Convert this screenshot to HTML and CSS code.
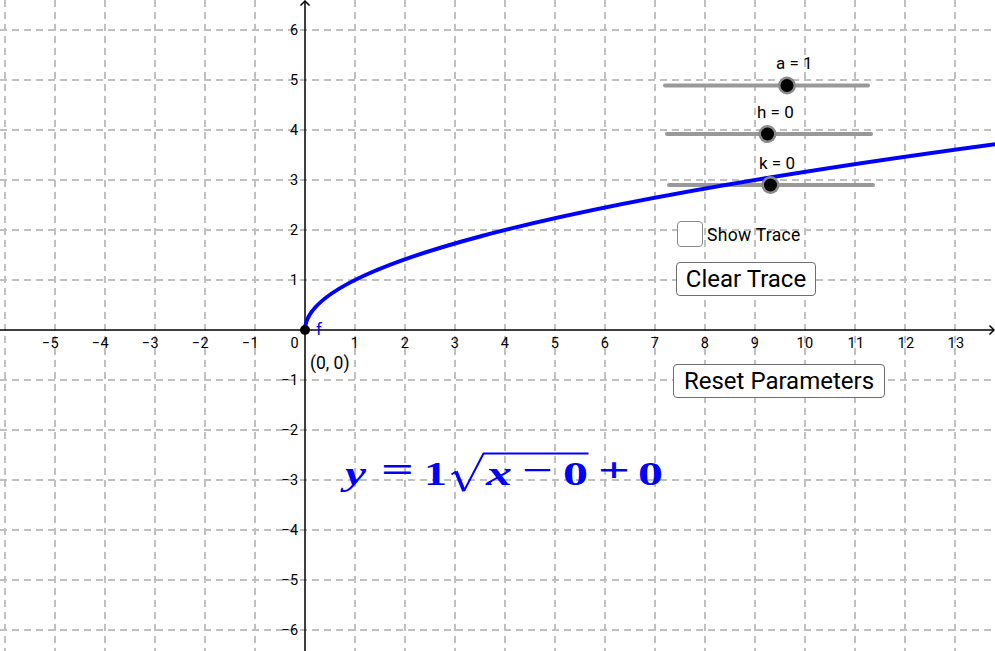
FILE: index.html
```html
<!DOCTYPE html>
<html>
<head>
<meta charset="utf-8">
<link rel="stylesheet" href="styles.css">
</head>
<body>
<div class="applet">
  <svg class="graph" width="995" height="651" viewBox="0 0 995 651">
    <g class="grid">
      <line x1="5" y1="0" x2="5" y2="651"/>
      <line x1="55" y1="0" x2="55" y2="651"/>
      <line x1="105" y1="0" x2="105" y2="651"/>
      <line x1="155" y1="0" x2="155" y2="651"/>
      <line x1="205" y1="0" x2="205" y2="651"/>
      <line x1="255" y1="0" x2="255" y2="651"/>
      <line x1="355" y1="0" x2="355" y2="651"/>
      <line x1="405" y1="0" x2="405" y2="651"/>
      <line x1="455" y1="0" x2="455" y2="651"/>
      <line x1="505" y1="0" x2="505" y2="651"/>
      <line x1="555" y1="0" x2="555" y2="651"/>
      <line x1="605" y1="0" x2="605" y2="651"/>
      <line x1="655" y1="0" x2="655" y2="651"/>
      <line x1="705" y1="0" x2="705" y2="651"/>
      <line x1="755" y1="0" x2="755" y2="651"/>
      <line x1="805" y1="0" x2="805" y2="651"/>
      <line x1="855" y1="0" x2="855" y2="651"/>
      <line x1="905" y1="0" x2="905" y2="651"/>
      <line x1="955" y1="0" x2="955" y2="651"/>
      <line x1="0" y1="30" x2="995" y2="30"/>
      <line x1="0" y1="80" x2="995" y2="80"/>
      <line x1="0" y1="130" x2="995" y2="130"/>
      <line x1="0" y1="180" x2="995" y2="180"/>
      <line x1="0" y1="230" x2="995" y2="230"/>
      <line x1="0" y1="280" x2="995" y2="280"/>
      <line x1="0" y1="380" x2="995" y2="380"/>
      <line x1="0" y1="430" x2="995" y2="430"/>
      <line x1="0" y1="480" x2="995" y2="480"/>
      <line x1="0" y1="530" x2="995" y2="530"/>
      <line x1="0" y1="580" x2="995" y2="580"/>
      <line x1="0" y1="630" x2="995" y2="630"/>
    </g>
    <g class="axes">
      <line x1="0" y1="330" x2="994" y2="330"/>
      <line x1="305" y1="1" x2="305" y2="651"/>
      <polyline points="989.5,325.5 994,330 989.5,334.5"/>
      <polyline points="300.5,5.5 305,1 309.5,5.5"/>
    </g>
    <g class="xlabels">
      <text class="neg" x="59" y="347.5">−5</text>
      <text class="neg" x="109" y="347.5">−4</text>
      <text class="neg" x="159" y="347.5">−3</text>
      <text class="neg" x="209" y="347.5">−2</text>
      <text class="neg" x="259" y="347.5">−1</text>
      <text class="neg" x="299" y="347.5">0</text>
      <text x="355" y="347.5">1</text>
      <text x="405" y="347.5">2</text>
      <text x="455" y="347.5">3</text>
      <text x="505" y="347.5">4</text>
      <text x="555" y="347.5">5</text>
      <text x="605" y="347.5">6</text>
      <text x="655" y="347.5">7</text>
      <text x="705" y="347.5">8</text>
      <text x="755" y="347.5">9</text>
      <text x="805" y="347.5">10</text>
      <text x="856" y="347.5">11</text>
      <text x="906" y="347.5">12</text>
      <text x="956" y="347.5">13</text>
    </g>
    <g class="ylabels">
      <text x="298.5" y="35">6</text>
      <text x="298.5" y="85">5</text>
      <text x="298.5" y="135">4</text>
      <text x="298.5" y="185">3</text>
      <text x="298.5" y="235">2</text>
      <text x="298.5" y="285">1</text>
      <text x="298.5" y="385">−1</text>
      <text x="298.5" y="435">−2</text>
      <text x="298.5" y="485">−3</text>
      <text x="298.5" y="535">−4</text>
      <text x="298.5" y="585">−5</text>
      <text x="298.5" y="635">−6</text>
    </g>
    <g class="slider-tracks">
      <line x1="665" y1="85.5" x2="868" y2="85.5"/>
      <line x1="667" y1="134" x2="871" y2="134"/>
      <line x1="669" y1="185" x2="873" y2="185"/>
    </g>
    <g class="slider-labels">
      <text x="776" y="69">a = 1</text>
      <text x="757" y="118">h = 0</text>
      <text x="759" y="169">k = 0</text>
    </g>
    <path class="curve" d="M305,330 Q305,236.46 1005,142.92"/>
    <g class="knobs">
      <circle class="halo" cx="787" cy="85.5" r="9"/>
      <circle class="knob" cx="787" cy="85.5" r="6.5"/>
      <circle class="halo" cx="767.5" cy="134" r="9"/>
      <circle class="knob" cx="767.5" cy="134" r="6.5"/>
      <circle class="halo" cx="770.5" cy="185" r="9"/>
      <circle class="knob" cx="770.5" cy="185" r="6.5"/>
    </g>
    <circle class="point" cx="305" cy="330" r="5"/>
    <text class="fname" x="316" y="335">f</text>
    <text class="coords" x="310" y="369">(0, 0)</text>
    <g class="formula">
      <text class="var" x="345" y="485" textLength="21" lengthAdjust="spacingAndGlyphs">y</text>
      <text class="op" x="381" y="481" textLength="33" lengthAdjust="spacingAndGlyphs">=</text>
      <text x="424" y="485" textLength="23" lengthAdjust="spacingAndGlyphs">1</text>
      <path class="radical-thin" d="M451.5,474.5 L456,471.5 M464,491 L483.5,453.5 L588.5,453.5"/>
      <path class="radical-thick" d="M456,471.5 L464,491"/>
      <text class="var" x="486" y="485" textLength="26" lengthAdjust="spacingAndGlyphs">x</text>
      <text class="op" x="522" y="481" textLength="31" lengthAdjust="spacingAndGlyphs">−</text>
      <text x="563" y="485" textLength="25" lengthAdjust="spacingAndGlyphs">0</text>
      <text class="op" x="598" y="481" textLength="32" lengthAdjust="spacingAndGlyphs">+</text>
      <text x="638" y="485" textLength="25" lengthAdjust="spacingAndGlyphs">0</text>
    </g>
  </svg>

  <label class="trace-toggle">
    <span class="checkbox"></span>
    <span class="trace-text">Show Trace</span>
  </label>
  <button class="btn btn-clear">Clear Trace</button>
  <button class="btn btn-reset">Reset Parameters</button>
</div>
</body>
</html>
```
FILE: styles.css
```css
html, body {
  margin: 0;
  padding: 0;
  background: #ffffff;
}
body {
  width: 995px;
  height: 651px;
  overflow: hidden;
  font-family: Roboto, "Liberation Sans", sans-serif;
}
.applet {
  position: relative;
  width: 995px;
  height: 651px;
  overflow: hidden;
}
.graph {
  display: block;
}
.grid line {
  stroke: #c0c0c0;
  stroke-width: 2;
  stroke-dasharray: 7 5;
}
.axes line,
.axes polyline {
  stroke: #000;
  stroke-width: 1.5;
  fill: none;
}
.xlabels text,
.ylabels text {
  font-family: Roboto, sans-serif;
  font-size: 14.5px;
  letter-spacing: 0.4px;
  fill: #000;
}
.xlabels text {
  text-anchor: middle;
}
.xlabels text.neg {
  text-anchor: end;
}
.ylabels text {
  text-anchor: end;
}
.slider-tracks line {
  stroke: #999999;
  stroke-width: 4;
  stroke-linecap: round;
}
.slider-labels text {
  font-family: Roboto, sans-serif;
  font-size: 17px;
  fill: #000;
}
.curve {
  fill: none;
  stroke: #0000ff;
  stroke-width: 4;
}
.halo {
  fill: #8a8a8a;
}
.knob {
  fill: #000;
}
.point {
  fill: #000;
}
.fname {
  font-family: Roboto, sans-serif;
  font-size: 17px;
  fill: #0000ff;
}
.coords {
  font-family: Roboto, sans-serif;
  font-size: 17.5px;
  fill: #000;
}
.formula text {
  font-family: "Liberation Serif", serif;
  font-weight: bold;
  font-size: 33px;
  fill: #0000ff;
}
.formula text.var {
  font-style: italic;
}
.radical-thin {
  fill: none;
  stroke: #0000ff;
  stroke-width: 2;
}
.radical-thick {
  fill: none;
  stroke: #0000ff;
  stroke-width: 3.6;
}
.trace-toggle {
  position: absolute;
  left: 677px;
  top: 221px;
  display: flex;
  align-items: center;
  gap: 4px;
  height: 26px;
}
.checkbox {
  box-sizing: border-box;
  width: 26px;
  height: 26px;
  border: 1.5px solid #8a8a8a;
  border-radius: 4px;
  background: #fff;
}
.trace-text {
  font-size: 17.5px;
  color: #000;
  line-height: 26px;
  letter-spacing: 0.3px;
  padding-top: 1px;
}
.btn {
  position: absolute;
  box-sizing: border-box;
  height: 34px;
  padding: 0;
  background: #fff;
  border: 1.5px solid #6e6e6e;
  border-radius: 4px;
  font-family: Roboto, sans-serif;
  font-size: 24px;
  color: #000;
  line-height: 31px;
  text-align: center;
}
.btn-clear {
  left: 676px;
  top: 262px;
  width: 140px;
}
.btn-reset {
  left: 673px;
  top: 364px;
  width: 212px;
}
```
